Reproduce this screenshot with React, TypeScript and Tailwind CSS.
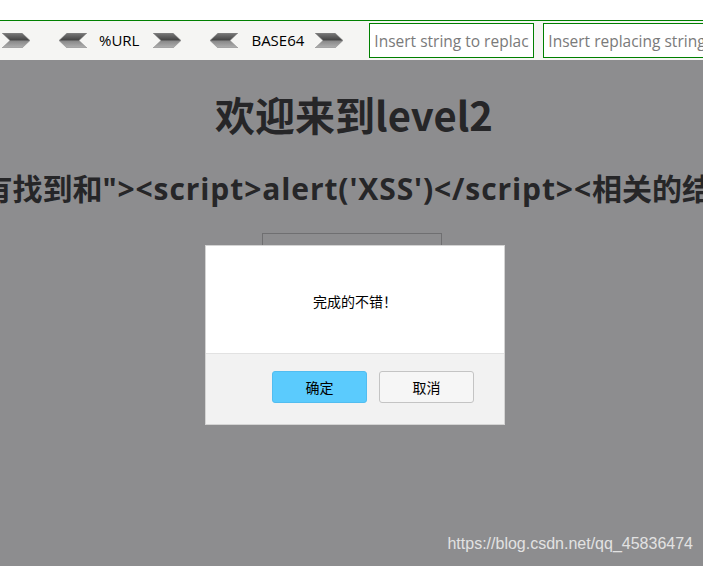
import React from "react";

type ChevronProps = {
  dir: "left" | "right";
  id: string;
};

function Chevron({ dir, id }: ChevronProps) {
  const points =
    dir === "right"
      ? "0,0 20,0 28,7.5 20,15 0,15 8,7.5"
      : "28,0 8,0 0,7.5 8,15 28,15 20,7.5";

  return (
    <svg width="28" height="15" viewBox="0 0 28 15" className="shrink-0">
      <defs>
        <linearGradient id={id} x1="0" y1="0" x2="0" y2="1">
          <stop offset="0" stopColor="#7a7a7a" />
          <stop offset="0.45" stopColor="#474747" />
          <stop offset="0.55" stopColor="#8a8a8a" />
          <stop offset="1" stopColor="#b2b2b2" />
        </linearGradient>
      </defs>
      <polygon points={points} fill={`url(#${id})`} stroke="#8f8f8f" strokeWidth="0.6" />
    </svg>
  );
}

export default function App() {
  return (
    <div
      className="relative flex h-[566px] w-[703px] flex-col overflow-hidden bg-white"
      style={{ fontFamily: '"Open Sans", "Noto Sans CJK SC", sans-serif' }}
    >
      {/* top strip */}
      <div className="h-[20px] shrink-0 bg-white" />

      {/* hackbar */}
      <div className="flex h-[40px] shrink-0 items-center border-t border-[#008000] bg-[#f5f5f3] pl-[2px] text-[15px] text-black">
        <Chevron dir="right" id="g1" />
        <div className="ml-[29px]">
          <Chevron dir="left" id="g2" />
        </div>
        <span className="ml-[12px] w-[42px]">%URL</span>
        <div className="ml-[14px]">
          <Chevron dir="right" id="g3" />
        </div>
        <div className="ml-[29px]">
          <Chevron dir="left" id="g4" />
        </div>
        <span className="ml-[13px] w-[54px]">BASE64</span>
        <div className="ml-[11px]">
          <Chevron dir="right" id="g5" />
        </div>
        <input
          placeholder="Insert string to replace"
          className="ml-[26px] h-[35px] w-[165px] shrink-0 border border-[#008000] bg-white px-[4px] text-[15.5px] outline-none placeholder:text-[#7a7a7a]"
        />
        <input
          placeholder="Insert replacing string"
          className="ml-[9px] h-[35px] w-[170px] shrink-0 border border-[#008000] bg-white px-[4px] text-[15.5px] outline-none placeholder:text-[#7a7a7a]"
        />
      </div>

      {/* page */}
      <div className="relative flex-1 bg-white">
        <div className="flex flex-col items-center text-[#444]">
          <h1
            className="ml-[5px] mt-[30px] text-[40px] font-bold leading-[48px]"
            style={{ fontFamily: '"Noto Sans CJK SC", sans-serif' }}
          >
            欢迎来到level2
          </h1>
          <div className="flex w-full justify-center">
            <h2 className="mt-[33px] shrink-0 whitespace-nowrap text-[30px] font-bold leading-[36px]">
              没有找到和
              <span className="tracking-[0.9px]">"&gt;&lt;script&gt;alert('XSS')&lt;/script&gt;&lt;</span>
              相关的结果.
            </h2>
          </div>
          <input className="mt-[26px] h-[30px] w-[180px] border border-[#c8c8c8] bg-white" />
        </div>

        {/* overlay */}
        <div className="absolute inset-0 bg-[rgba(2,3,6,0.45)]" />

        {/* dialog */}
        <div className="absolute left-[205px] top-[185px] flex h-[180px] w-[300px] flex-col border border-[#d4d4d4] bg-white">
          <div
            className="flex h-[107px] items-center justify-center pt-[3px] text-[14px] text-black"
            style={{ fontFamily: '"Noto Sans CJK SC", sans-serif' }}
          >
            完成的不错！
          </div>
          <div className="flex flex-1 justify-end gap-[12px] border-t border-[#e2e2e2] bg-[#f2f2f2] pr-[30px] pt-[17px]">
            <button
              className="h-[32px] w-[95px] rounded-[3px] border border-[#52bdf0] bg-[#5bcbfd] text-[14px] text-black"
              style={{ fontFamily: '"Noto Sans CJK SC", sans-serif' }}
            >
              确定
            </button>
            <button
              className="h-[32px] w-[95px] rounded-[3px] border border-[#c4c4c4] bg-[#f6f6f6] text-[14px] text-black"
              style={{ fontFamily: '"Noto Sans CJK SC", sans-serif' }}
            >
              取消
            </button>
          </div>
        </div>

        {/* watermark */}
        <div
          className="absolute bottom-[10px] right-[10px] text-[16px] text-[#e2e2e2]"
          style={{ fontFamily: '"Liberation Sans", sans-serif' }}
        >
          https://blog.csdn.net/qq_45836474
        </div>
      </div>
    </div>
  );
}
